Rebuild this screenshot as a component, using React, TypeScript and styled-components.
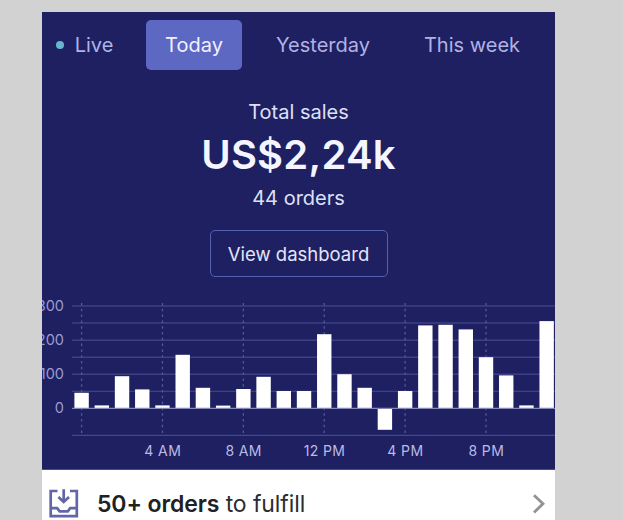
import React from "react";
import styled, { createGlobalStyle } from "styled-components";

const GlobalStyle = createGlobalStyle`
  * { box-sizing: border-box; }
  body {
    margin: 0;
    background: #d2d2d2;
    font-family: Inter, "Liberation Sans", sans-serif;
    overflow: hidden;
  }
`;

const Screen = styled.main`
  width: 513px;
  height: 520px;
  margin-left: 42px;
  padding-top: 12px;
  display: flex;
  flex-direction: column;
  overflow: hidden;
`;

const Panel = styled.section`
  height: 458px;
  flex: none;
  background: #1e2062;
  display: flex;
  flex-direction: column;
  border-bottom: 1px solid #4a4c88;
`;

const Tabs = styled.nav`
  display: flex;
  align-items: center;
  height: 50px;
  margin-top: 8px;
  padding-left: 13px;
`;

const Tab = styled.button<{ $active?: boolean; $width: number; $gap?: number; $spacing?: number }>`
  width: ${(p) => p.$width}px;
  height: 50px;
  margin: 0 0 0 ${(p) => p.$gap ?? 0}px;
  padding: 0;
  flex: none;
  border: 0;
  border-radius: 5px;
  display: flex;
  align-items: center;
  justify-content: center;
  white-space: nowrap;
  font: 400 20px/24px Inter, sans-serif;
  letter-spacing: ${(p) => p.$spacing ?? 0}px;
  color: ${(p) => (p.$active ? "#f0f1ff" : "#b0b2e4")};
  background: ${(p) => (p.$active ? "#5d68c2" : "transparent")};
`;

const LiveDot = styled.span`
  width: 8px;
  height: 8px;
  margin-right: 11px;
  border-radius: 50%;
  background: #68b5cc;
`;

const Summary = styled.div`
  display: flex;
  flex-direction: column;
  align-items: center;
  padding-top: 29px;
  color: #dfe0f6;
`;

const Caption = styled.div<{ $spacing?: number }>`
  font-size: 20px;
  line-height: 26px;
  letter-spacing: ${(p) => p.$spacing ?? 0}px;
`;

const Total = styled.div`
  height: 60px;
  font-size: 40px;
  line-height: 60px;
  font-weight: 600;
  letter-spacing: 0.2px;
  color: #f5f5ff;
`;

const DashboardButton = styled.button`
  width: 178px;
  height: 47px;
  margin-top: 19px;
  padding: 0;
  border: 1.5px solid #5560ae;
  border-radius: 5px;
  background: transparent;
  font: 400 18.5px/24px Inter, sans-serif;
  color: #e4e5f8;
`;

const ChartSvg = styled.svg`
  display: block;
  flex: none;
  margin-top: 18px;
  font-family: Inter, sans-serif;
`;

const FulfillRow = styled.div`
  height: 70px;
  flex: none;
  display: flex;
  align-items: flex-start;
  background: #fff;
  padding: 18px 7px 0 6px;
`;

const FulfillText = styled.div`
  flex: 1;
  margin: 0 0 0 18px;
  font-size: 23px;
  line-height: 32px;
  letter-spacing: -0.1px;
  color: #2c2d31;
  strong {
    font-weight: 600;
    color: #202124;
  }
`;

const STEP = 20.22;
const FIRST = 39.6;
const ZERO = 113.4;
const barHeights = [
  15.6, 3, 32.2, 19, 3, 53.6, 20.6, 2.8, 19.4, 31.6, 17.4, 17.4, 74.2, 34.2, 20.6,
  -21.4, 17.4, 83, 83.6, 79, 51.2, 33, 3, 87.3,
];
const gridRows = [11, 28, 45.2, 62.2, 79.3, 96.4];
const yLabels = [
  { text: "300", y: 16 },
  { text: "200", y: 50 },
  { text: "100", y: 84 },
  { text: "0", y: 118 },
];
const xLabels = [
  { text: "4 AM", slot: 4 },
  { text: "8 AM", slot: 8 },
  { text: "12 PM", slot: 12 },
  { text: "4 PM", slot: 16 },
  { text: "8 PM", slot: 20 },
];

const SalesChart = () => (
  <ChartSvg width="513" height="174" viewBox="0 0 513 174">
    {gridRows.map((y) => (
      <line key={y} x1="30" x2="513" y1={y} y2={y} stroke="#3d4085" strokeWidth="1.4" />
    ))}
    <line x1="30" x2="513" y1="140.4" y2="140.4" stroke="#44478b" strokeWidth="1.4" />
    {[0, 4, 8, 12, 16, 20].map((slot) => (
      <line
        key={slot}
        x1={FIRST + slot * STEP}
        x2={FIRST + slot * STEP}
        y1="8"
        y2="140"
        stroke="#54579a"
        strokeWidth="1.3"
        strokeDasharray="2.5 3.3"
      />
    ))}
    {barHeights.map((h, i) => (
      <rect
        key={i}
        x={FIRST + i * STEP - 7.2}
        y={h > 0 ? ZERO - h : ZERO}
        width="14.4"
        height={Math.abs(h)}
        fill="#fff"
      />
    ))}
    <line x1="30" x2="513" y1={ZERO} y2={ZERO} stroke="#8486b8" strokeWidth="1.3" />
    {yLabels.map((l) => (
      <text key={l.text} x="22" y={l.y} textAnchor="end" fontSize="14.5" fill="#9a9cd0">
        {l.text}
      </text>
    ))}
    {xLabels.map((l) => (
      <text
        key={l.text}
        x={FIRST + l.slot * STEP + 0.3}
        y="161"
        textAnchor="middle"
        fontSize="14"
        letterSpacing="0.4"
        fill="#b9bbe2"
      >
        {l.text}
      </text>
    ))}
  </ChartSvg>
);

const InboxIcon = () => (
  <svg width="31" height="31" viewBox="0 0 31 31" fill="none" stroke="#6265a8" strokeWidth="2.7">
    <path d="M9.5 3H2.7V28.2H28.8V3H22" />
    <path d="M2.7 20.2H9.2L11.6 23.3H19.8L22.2 20.2H28.8" />
    <path d="M15.7 1.2V13.6M10.4 9L15.7 14L21 9" />
  </svg>
);

const Chevron = () => (
  <svg width="16" height="32" viewBox="0 0 16 32" fill="none" stroke="#929292" strokeWidth="2.8">
    <path d="M2 7.2L11 15.8L2 24.4" />
  </svg>
);

export default function App() {
  return (
    <>
      <GlobalStyle />
      <Screen>
        <Panel>
          <Tabs>
            <Tab $width={59}>
              <LiveDot />
              Live
            </Tab>
            <Tab $active $width={96} $gap={32}>Today</Tab>
            <Tab $width={98} $gap={32}>Yesterday</Tab>
            <Tab $width={100} $gap={50}>This week</Tab>
          </Tabs>
          <Summary>
            <Caption>Total sales</Caption>
            <Total>US$2,24k</Total>
            <Caption>44 orders</Caption>
            <DashboardButton>View dashboard</DashboardButton>
          </Summary>
          <SalesChart />
        </Panel>
        <FulfillRow>
          <InboxIcon />
          <FulfillText>
            <strong>50+ orders</strong> to fulfill
          </FulfillText>
          <Chevron />
        </FulfillRow>
      </Screen>
    </>
  );
}
